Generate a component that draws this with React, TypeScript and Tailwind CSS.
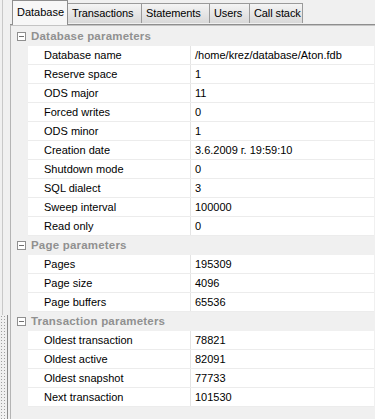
import React from 'react';

type Row = { label: string; value: string };
type Group = { title: string; rows: Row[] };

const groups: Group[] = [
  {
    title: 'Database parameters',
    rows: [
      { label: 'Database name', value: '/home/krez/database/Aton.fdb' },
      { label: 'Reserve space', value: '1' },
      { label: 'ODS major', value: '11' },
      { label: 'Forced writes', value: '0' },
      { label: 'ODS minor', value: '1' },
      { label: 'Creation date', value: '3.6.2009 г. 19:59:10' },
      { label: 'Shutdown mode', value: '0' },
      { label: 'SQL dialect', value: '3' },
      { label: 'Sweep interval', value: '100000' },
      { label: 'Read only', value: '0' },
    ],
  },
  {
    title: 'Page parameters',
    rows: [
      { label: 'Pages', value: '195309' },
      { label: 'Page size', value: '4096' },
      { label: 'Page buffers', value: '65536' },
    ],
  },
  {
    title: 'Transaction parameters',
    rows: [
      { label: 'Oldest transaction', value: '78821' },
      { label: 'Oldest active', value: '82091' },
      { label: 'Oldest snapshot', value: '77733' },
      { label: 'Next transaction', value: '101530' },
    ],
  },
];

const tabs = [
  { name: 'Database', w: 'w-[56px]' },
  { name: 'Transactions', w: 'w-[74px]' },
  { name: 'Statements', w: 'w-[68px]' },
  { name: 'Users', w: 'w-[40px]' },
  { name: 'Call stack', w: 'w-[53px]' },
];

const MinusBox: React.FC = () => (
  <div className="w-[9px] h-[9px] border border-[#8f8f8f] bg-white flex items-center justify-center">
    <div className="w-[5px] h-px bg-[#6f6f6f]" />
  </div>
);

const App: React.FC = () => {
  return (
    <div className="w-[387px] h-[419px] bg-white flex overflow-hidden font-['Liberation_Sans',Arial,sans-serif] text-[11px] text-black">
      <div className="w-[375px] bg-[#f0f0f0] flex">
        {/* left splitter */}
        <div className="w-[10px] flex flex-col">
          <div className="flex-1 ml-[2px] border-l border-[#c8c8c8]" />
          <div className="h-[104px] flex">
            <div className="w-[7px] bg-[radial-gradient(circle,#a0a0a0_0.8px,transparent_1px)] bg-[length:3px_3px]" />
            <div className="w-px bg-[#8a8a8a]" />
          </div>
        </div>

        <div className="flex-1 flex flex-col">
          {/* tabs */}
          <div className="h-[25px] flex items-end pl-[2px] border-b border-[#8e8e8e] shadow-[0_1px_0_#c4c4c4]">
            {tabs.map((t, i) =>
              i === 0 ? (
                <div
                  key={t.name}
                  className={`${t.w} h-[25px] -mb-px relative z-10 bg-[#f7f7f7] border border-b-0 border-[#8e8e8e] flex items-center pl-[4px] pb-[2px]`}
                >
                  {t.name}
                </div>
              ) : (
                <div
                  key={t.name}
                  className={`${t.w} h-[20px] mb-px bg-gradient-to-b from-[#f4f4f4] to-[#d9d9d9] border border-l-0 border-b-0 border-[#9a9a9a] flex items-center pl-[4px] tracking-[-0.1px] whitespace-nowrap`}
                >
                  {t.name}
                </div>
              )
            )}
          </div>

          {/* panel */}
          <div className="flex-1 pl-[2px] pt-[2px] border-l border-[#b4b4b4]">
            <div className="w-[361px]">
              {groups.map(g => (
                <div key={g.title}>
                  <div className="h-[19px] bg-[#f0f0f0] flex items-center pl-[4px] gap-[5px]">
                    <MinusBox />
                    <span className="font-bold text-[11.5px] tracking-[0.2px] text-[#909090]">{g.title}</span>
                  </div>
                  {g.rows.map(r => (
                    <div key={r.label} className="h-[19px] flex">
                      <div className="w-[15px] bg-[#f0f0f0]" />
                      <div className="flex-1 flex bg-white border-b border-[#ececec]">
                        <div className="w-[163px] pl-[16px] flex items-center border-r border-[#e4e4e4]">{r.label}</div>
                        <div className="flex-1 pl-[4px] flex items-center">{r.value}</div>
                      </div>
                    </div>
                  ))}
                </div>
              ))}
            </div>
          </div>
        </div>
      </div>
    </div>
  );
};

export default App;
